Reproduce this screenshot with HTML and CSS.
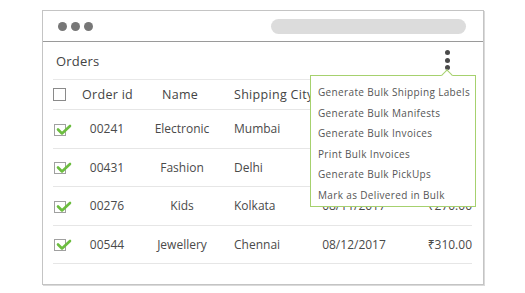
FILE: index.html
```html
<!DOCTYPE html>
<html>
<head>
<meta charset="utf-8">
<link rel="stylesheet" href="styles.css">
</head>
<body>
<div class="window">
  <div class="titlebar">
    <div class="dots"><span></span><span></span><span></span></div>
    <div class="address"></div>
  </div>
  <div class="content">
    <div class="head">
      <span class="title">Orders</span>
      <span class="kebab"><i></i><i></i><i></i></span>
    </div>
    <div class="table">
      <div class="row hdr">
        <div class="c cb"><span class="box"></span></div>
        <div class="c id">Order id</div>
        <div class="c name">Name</div>
        <div class="c city">Shipping City</div>
        <div class="c date"></div>
        <div class="c amt"></div>
      </div>
      <div class="row">
        <div class="c cb"><span class="box checked"><svg viewBox="0 0 14 10" class="tick"><path d="M1 4.5 L5 8.5 L13 1"/></svg></span></div>
        <div class="c id">00241</div>
        <div class="c name">Electronic</div>
        <div class="c city">Mumbai</div>
        <div class="c date"></div>
        <div class="c amt"></div>
      </div>
      <div class="row">
        <div class="c cb"><span class="box checked"><svg viewBox="0 0 14 10" class="tick"><path d="M1 4.5 L5 8.5 L13 1"/></svg></span></div>
        <div class="c id">00431</div>
        <div class="c name">Fashion</div>
        <div class="c city">Delhi</div>
        <div class="c date"></div>
        <div class="c amt"></div>
      </div>
      <div class="row">
        <div class="c cb"><span class="box checked"><svg viewBox="0 0 14 10" class="tick"><path d="M1 4.5 L5 8.5 L13 1"/></svg></span></div>
        <div class="c id">00276</div>
        <div class="c name">Kids</div>
        <div class="c city">Kolkata</div>
        <div class="c date">08/11/2017</div>
        <div class="c amt">₹270.00</div>
      </div>
      <div class="row">
        <div class="c cb"><span class="box checked"><svg viewBox="0 0 14 10" class="tick"><path d="M1 4.5 L5 8.5 L13 1"/></svg></span></div>
        <div class="c id">00544</div>
        <div class="c name">Jewellery</div>
        <div class="c city">Chennai</div>
        <div class="c date">08/12/2017</div>
        <div class="c amt">₹310.00</div>
      </div>
    </div>
    <ul class="menu">
      <li>Generate Bulk Shipping Labels</li>
      <li>Generate Bulk Manifests</li>
      <li>Generate Bulk Invoices</li>
      <li>Print Bulk Invoices</li>
      <li>Generate Bulk PickUps</li>
      <li>Mark as Delivered in Bulk</li>
    </ul>
  </div>
</div>
</body>
</html>
```

FILE: styles.css
```css
* { box-sizing: border-box; }
html, body { margin: 0; padding: 0; background: #fff; }
body {
  font-family: "Open Sans", "Noto Sans", sans-serif;
  color: #4a4a4a;
  width: 525px;
  height: 293px;
  overflow: hidden;
}
.window {
  margin: 10px 0 0 42px;
  width: 442px;
  height: 275px;
  border: 1px solid #c4c4c4;
  box-shadow: 1px 1px 0 #dadada;
  background: #fff;
}
.titlebar {
  height: 31px;
  border-bottom: 1px solid #9a9a9a;
  display: flex;
  align-items: center;
  padding: 0 17px 0 15px;
  justify-content: space-between;
}
.dots { display: flex; gap: 4px; }
.dots span {
  width: 9px; height: 9px; border-radius: 50%;
  background: #777;
}
.address {
  width: 195px; height: 15px; border-radius: 8px;
  background: #dcdcdc;
}
.content {
  position: relative;
  padding: 0 11px 0 10px;
}
.head {
  height: 38px;
  display: flex;
  align-items: center;
  justify-content: space-between;
  border-bottom: 1px solid #e8e8e8;
  padding: 1px 0 0 3px;
}
.title { font-size: 13px; color: #444; letter-spacing: 0.2px; }
.kebab {
  display: flex; flex-direction: column; gap: 2.5px;
  margin-right: 22px; margin-top: -2px;
}
.kebab i {
  display: block; width: 5px; height: 5px; border-radius: 50%;
  background: #4a4a4a;
}
.row {
  display: grid;
  grid-template-columns: 29px 50px 100px 84px 76px 80px;
  align-items: center;
  height: 38.5px;
  border-bottom: 1px solid #e6e6e6;
  font-size: 12px;
  color: #4a4a4a;
}
.row.hdr { height: 30px; font-size: 12.5px; color: #444; letter-spacing: 0.3px; }
.c { white-space: nowrap; }
.id, .name, .date { text-align: center; }
.city { padding-left: 2px; }
.amt { text-align: right; }
.hdr .id { text-align: left; }
.hdr .name { text-align: left; padding-left: 30px; }
.box {
  position: relative;
  display: block;
  width: 13px; height: 13px;
  border: 1px solid #8a8a8a;
  background: #fff;
}
.box.checked { width: 12px; height: 12px; margin-left: 1px; margin-top: 2px; border-color: #a0a0a0; }
.tick {
  position: absolute;
  left: 2px; top: 0px;
  width: 14px; height: 10px;
  overflow: visible;
}
.tick path {
  fill: none;
  stroke: #6cbd3f;
  stroke-width: 2.6;
  stroke-linecap: round;
  stroke-linejoin: round;
}
.menu {
  position: absolute;
  left: 267px;
  top: 33px;
  width: 166px;
  margin: 0;
  padding: 6px 0 0 7px;
  height: 132px;
  list-style: none;
  background: #fff;
  border: 1.5px solid #a6d16e;
  font-size: 10px;
  letter-spacing: 0.35px;
  color: #555;
}
.menu::before {
  content: "";
  position: absolute;
  top: -5px; left: 132px;
  width: 7px; height: 7px;
  background: #fff;
  border-left: 1.5px solid #a6d16e;
  border-top: 1.5px solid #a6d16e;
  transform: rotate(45deg);
}
.menu li { height: 20.5px; line-height: 20.5px; white-space: nowrap; }
```
